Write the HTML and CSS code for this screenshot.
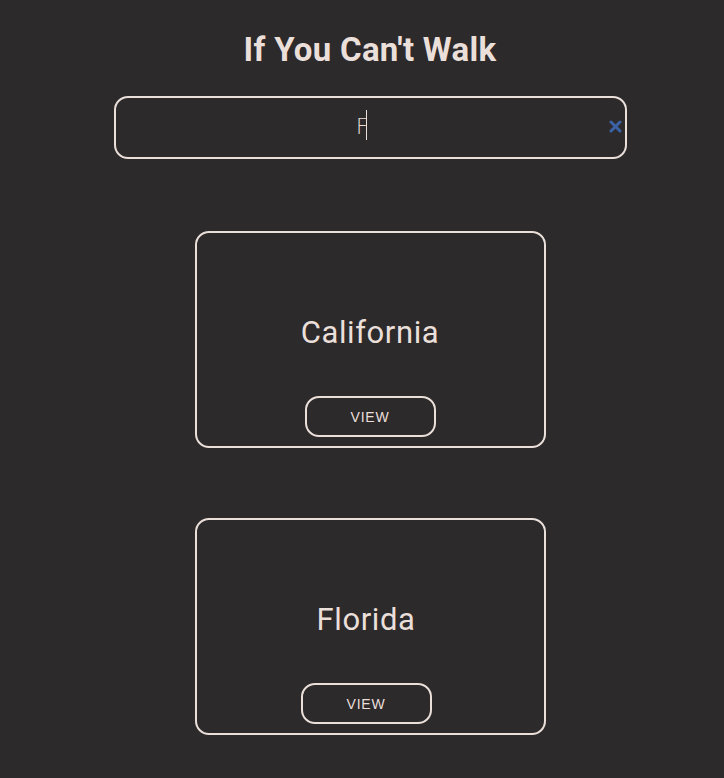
FILE: index.html
```html
<!DOCTYPE html>
<html lang="en">
<head>
<meta charset="utf-8">
<title>If You Can't Walk</title>
<link rel="stylesheet" href="styles.css">
</head>
<body>
<main class="page">
  <h1 class="title">If You Can't Walk</h1>
  <div class="search">
    <input class="search-input" type="text" value="F" aria-label="Search states">
    <span class="search-caret" aria-hidden="true"></span>
    <button class="search-clear" type="button" aria-label="Clear">
      <svg width="13" height="13" viewBox="0 0 13 13"><path d="M2 2 L11 11 M11 2 L2 11" stroke="#3b62a6" stroke-width="3" stroke-linecap="round"/></svg>
    </button>
  </div>
  <ul class="cards">
    <li class="card">
      <h2 class="card-name">California</h2>
      <button class="view-btn" type="button">VIEW</button>
    </li>
    <li class="card card-shift">
      <h2 class="card-name">Florida</h2>
      <button class="view-btn" type="button">VIEW</button>
    </li>
  </ul>
</main>
</body>
</html>
```
FILE: styles.css
```css
html, body {
  margin: 0;
  padding: 0;
  background: #2c2a2b;
}
body {
  padding-left: 16px;
  font-family: Roboto, "Liberation Sans", sans-serif;
  color: #ebdfda;
}
.page {
  display: flex;
  flex-direction: column;
  align-items: center;
  padding-top: 31px;
}
.title {
  margin: 0;
  font-size: 33px;
  font-weight: 700;
  line-height: 38px;
  color: #ebdfda;
  letter-spacing: 0.3px;
}
.search {
  position: relative;
  margin-top: 27px;
  width: 513px;
}
.search-input {
  box-sizing: border-box;
  display: block;
  width: 100%;
  height: 63px;
  border: 2px solid #ebdfda;
  border-radius: 14px;
  background: transparent;
  color: #ebdfda;
  font-family: "DejaVu Sans", sans-serif;
  font-size: 21px;
  font-weight: 300;
  text-align: center;
  outline: none;
  caret-color: #ebdfda;
  padding: 0 46px 2px 30px;
}
.search-caret {
  position: absolute;
  left: 252px;
  top: 14px;
  width: 1px;
  height: 30px;
  background: #ebdfda;
}
.search-clear {
  position: absolute;
  right: 4px;
  top: 23px;
  width: 15px;
  height: 15px;
  padding: 0;
  border: 0;
  background: none;
  display: flex;
  align-items: center;
  justify-content: center;
}
.cards {
  list-style: none;
  margin: 72px 0 0;
  padding: 0;
  display: flex;
  flex-direction: column;
  align-items: center;
  gap: 70px;
}
.card {
  box-sizing: border-box;
  width: 351px;
  height: 217px;
  border: 2px solid #ebdfda;
  border-radius: 14px;
  display: flex;
  flex-direction: column;
  align-items: center;
  padding-top: 80px;
}
.card-shift {
  padding-right: 8px;
}
.card-name {
  margin: 0;
  font-size: 31px;
  font-weight: 400;
  line-height: 40px;
  letter-spacing: 0.6px;
  color: #ebdfda;
}
.view-btn {
  box-sizing: border-box;
  margin-top: 43px;
  width: 131px;
  height: 41px;
  border: 2px solid #ebdfda;
  border-radius: 14px;
  background: transparent;
  color: #ebdfda;
  font-family: "Liberation Sans", Arial, sans-serif;
  font-size: 14px;
  letter-spacing: 0.8px;
}
```
